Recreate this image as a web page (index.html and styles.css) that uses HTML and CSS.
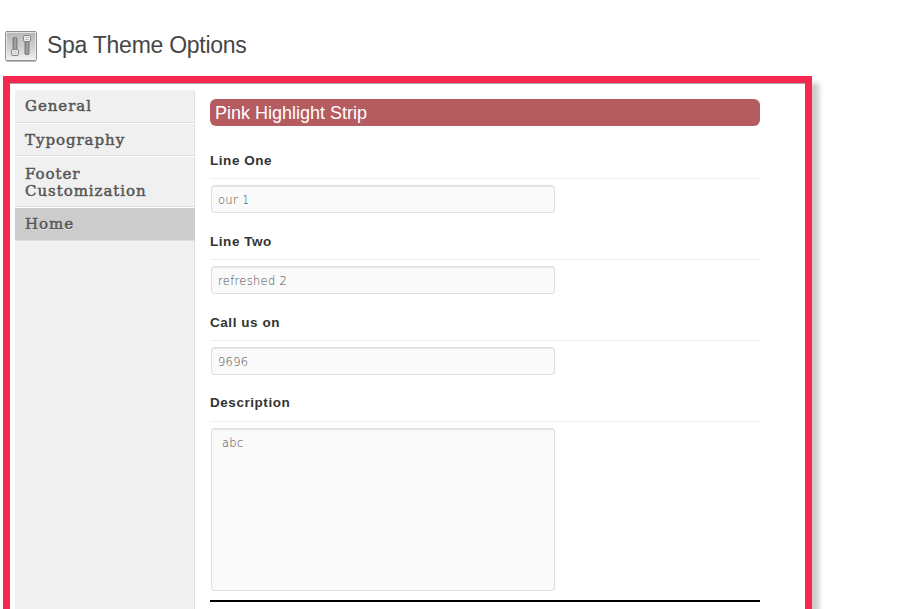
FILE: index.html
```html
<!DOCTYPE html>
<html lang="en">
<head>
<meta charset="utf-8">
<title>Spa Theme Options</title>
<link rel="stylesheet" href="styles.css">
</head>
<body>
<header class="page-head">
  <svg class="page-icon" width="32" height="32" viewBox="0 0 32 32">
    <defs>
      <linearGradient id="plate" x1="0" y1="0" x2="0" y2="1"><stop offset="0" stop-color="#b5b5b5"/><stop offset=".65" stop-color="#d6d6d6"/><stop offset="1" stop-color="#f4f4f4"/></linearGradient>
      <linearGradient id="slot" x1="0" y1="0" x2="1" y2="0"><stop offset="0" stop-color="#777"/><stop offset=".5" stop-color="#aaa"/><stop offset="1" stop-color="#858585"/></linearGradient>
    </defs>
    <rect x=".5" y="1.5" width="31" height="29" rx="1.5" fill="url(#plate)" stroke="#8f8f8f"/>
    <rect x="1.5" y="2.5" width="29" height="27" fill="none" stroke="#f2f2f2" stroke-opacity=".75"/>
    <rect x="1" y="31" width="30" height="1" fill="#bbb"/>
    <rect x="8" y="7.500" width="4" height="13" rx="1" fill="url(#slot)" stroke="#808080"/>
    <rect x="20" y="10.500" width="4" height="14" rx="1" fill="url(#slot)" stroke="#808080"/>
    <rect x="6.500" y="19.500" width="7" height="6" rx="1.5" fill="#f2f2f2" stroke="#858585"/>
    <rect x="18.500" y="5.500" width="7" height="6" rx="1.500" fill="#f2f2f2" stroke="#858585"/>
    <path d="M8 21.500h4M8 23.500h4M20 7.500h4M20 9.500h4" stroke="#bbb"/>
  </svg>
  <h1 class="page-title">Spa Theme Options</h1>
</header>
<main class="panel">
  <nav class="tabs">
    <a class="tab tab-first">General</a>
    <a class="tab">Typography</a>
    <a class="tab tab-tall">Footer Customization</a>
    <a class="tab tab-active">Home</a>
  </nav>
  <section class="content">
    <h2 class="strip">Pink Highlight Strip</h2>
    <div class="field"><label class="label">Line One</label><input class="input" value="our 1"></div>
    <div class="field"><label class="label">Line Two</label><input class="input" value="refreshed 2"></div>
    <div class="field"><label class="label">Call us on</label><input class="input" value="9696"></div>
    <div class="field field-last"><label class="label label-up">Description</label><textarea class="input area">abc</textarea></div>
    <div class="rule"></div>
  </section>
</main>
</body>
</html>
```
FILE: styles.css
```css
* { box-sizing: border-box; }
html { height: 609px; overflow: hidden; }
body { margin: 0; height: 609px; overflow: hidden; background: #fff; font-family: "Liberation Sans", sans-serif; }
.page-head { display: flex; height: 76px; padding: 30px 0 0 5px; gap: 10px; }
.page-icon { display: block; flex: none; }
.page-title { margin: 0; font-size: 23px; line-height: 30px; font-weight: 400; letter-spacing: -.27px; color: #464646; }
.panel { display: flex; width: 809px; height: 560px; margin-left: 3px; border: 7px solid #f42850; padding: 7px 45px 0 5px; box-shadow: 7px 7px 5px #ccc, inset 0 1px 0 #aaa; }
.tabs { width: 180px; height: 540px; flex: none; background: #f0f0f0; border-right: 1px solid #dfdfdf; }
.tab { display: block; width: 180px; height: 33px; padding: 8px 10px 0; border-top: 1px solid #fff; border-bottom: 1px solid #dfdfdf; border-right: 1px solid #dfdfdf; font: 400 15px/17px "DejaVu Serif", serif; letter-spacing: .95px; color: #555; -webkit-text-stroke: .5px #555; text-shadow: 0 1px 0 #fff; }
.tab-first { padding-top: 7px; border-top-color: #f0f0f0; }
.tab-tall { height: 51px; padding-top: 9px; }
.tab-active { height: 34px; background: #ccc; border-color: #fff #ccc #dfdfdf; }
.content { width: 550px; margin-left: 15px; padding-top: 9px; }
.strip { margin: 0 0 24px; height: 27px; border-radius: 6px; padding: 1px 0 0 5px; background: #b55c60; color: #fff; font-size: 18px; line-height: 27px; font-weight: 400; }
.field { height: 81px; }
.label { display: block; height: 29px; margin-bottom: 6px; padding-top: 3px; border-bottom: 1px solid #eee; font-size: 13.5px; line-height: 16px; font-weight: bold; letter-spacing: .55px; color: #333; }
.label-up { padding-top: 2px; }
.input { display: block; width: 344px; height: 28px; margin: 0 0 0 1px; padding: 1px 6px 0; border: 1px solid #dfdfdf; border-radius: 3px; background: #fafafa; box-shadow: inset 0 1px 1px #e6e6e6; color: #484848; font: 200 11.5px/15px "DejaVu Sans", sans-serif; letter-spacing: .3px; outline: none; }
.area { height: 163px; padding: 7px 10px; resize: none; }
.field-last { height: 207px; }
.rule { height: 2px; background: #000; }
```
